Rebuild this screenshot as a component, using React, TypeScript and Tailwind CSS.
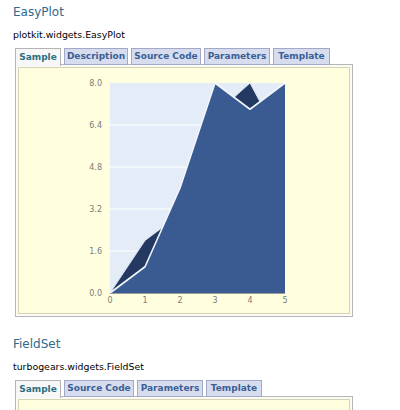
const font = { fontFamily: '"DejaVu Sans", Verdana, sans-serif' }

type TabDef = { label: string; w: string }

function Tabs({ tabs }: { tabs: TabDef[] }) {
  return (
    <div className="flex gap-[3px] ml-[2px] h-[17px] relative z-10">
      {tabs.map((t, i) => (
        <div
          key={t.label}
          className={
            i === 0
              ? `${t.w} h-[18px] border border-b-0 border-[#b4b4b4] bg-[#f7f7f7] text-[#2b6f80] flex items-center justify-center text-[9px] font-bold`
              : `${t.w} h-[17px] border border-[#a2a9c6] bg-[#d7dcef] text-[#3a5f95] flex items-center justify-center text-[9px] font-bold`
          }
        >
          {t.label}
        </div>
      ))}
    </div>
  )
}

function Chart() {
  const x = (i: number) => 110 + i * 35
  const y = (v: number) => 293 - v * 26.25
  const a = [0, 2, 3, 6.8, 8, 5.5]
  const b = [0, 1, 4, 8, 7, 8]
  const area = (vals: number[]) =>
    `M${x(0)},${y(0)} ` + vals.map((v, i) => `L${x(i)},${y(v)}`).join(' ') + ` L${x(5)},${y(0)} Z`
  const line = (vals: number[]) => vals.map((v, i) => `${i ? 'L' : 'M'}${x(i)},${y(v)}`).join(' ')
  const yTicks = [0, 1.6, 3.2, 4.8, 6.4, 8.0]

  return (
    <svg width={329} height={245} viewBox="19 68 329 245" className="block">
      <rect x={110} y={83} width={175} height={210} fill="#e3ecf7" />
      {yTicks.slice(1, 5).map((v) => (
        <line key={v} x1={110} x2={285} y1={y(v)} y2={y(v)} stroke="#ffffff" strokeWidth={1.2} />
      ))}
      <path d={area(a)} fill="#233961" />
      <path d={line(a)} fill="none" stroke="#d8e4f2" strokeWidth={1} />
      <path d={area(b)} fill="#3a5a92" />
      <path d={line(b)} fill="none" stroke="#f2f6fb" strokeWidth={1.6} strokeLinejoin="round" />
      <line x1={110} x2={285} y1={293.5} y2={293.5} stroke="#9a9a9a" strokeWidth={1} />
      {yTicks.map((v) => (
        <text
          key={v}
          x={102}
          y={y(v) + 3}
          textAnchor="end"
          fontSize={8}
          fill="#7a7a7a"
          fontFamily='"DejaVu Sans", Verdana, sans-serif'
        >
          {v.toFixed(1)}
        </text>
      ))}
      {[0, 1, 2, 3, 4, 5].map((i) => (
        <text
          key={i}
          x={x(i)}
          y={303}
          textAnchor="middle"
          fontSize={8}
          fill="#7a7a7a"
          fontFamily='"DejaVu Sans", Verdana, sans-serif'
        >
          {i}
        </text>
      ))}
    </svg>
  )
}

function Section({
  title,
  module,
  tabs,
  children,
}: {
  title: string
  module: string
  tabs: TabDef[]
  children?: React.ReactNode
}) {
  return (
    <div>
      <h2 className="text-[12px] leading-[15px] text-[#2f6a8c] pl-[13px]">{title}</h2>
      <p className="text-[9.4px] leading-[12px] text-black pl-[13px] mt-[9px]">{module}</p>
      <div className="pl-[13px] mt-[7px]">
        <Tabs tabs={tabs} />
        <div className="w-[338px] ml-[2px] -mt-px border border-[#b6b6b6] bg-[#fbfbf6] p-[2px]">
          <div className="border border-[#d4d4b4] bg-[#ffffdf]">{children}</div>
        </div>
      </div>
    </div>
  )
}

export default function App() {
  return (
    <div className="w-[400px] h-[410px] bg-white overflow-hidden pt-[5px]" style={font}>
      <Section
        title="EasyPlot"
        module="plotkit.widgets.EasyPlot"
        tabs={[
          { label: 'Sample', w: 'w-[46px]' },
          { label: 'Description', w: 'w-[64px]' },
          { label: 'Source Code', w: 'w-[70px]' },
          { label: 'Parameters', w: 'w-[66px]' },
          { label: 'Template', w: 'w-[57px]' },
        ]}
      >
        <Chart />
      </Section>
      <div className="h-[20px]" />
      <Section
        title="FieldSet"
        module="turbogears.widgets.FieldSet"
        tabs={[
          { label: 'Sample', w: 'w-[46px]' },
          { label: 'Source Code', w: 'w-[70px]' },
          { label: 'Parameters', w: 'w-[66px]' },
          { label: 'Template', w: 'w-[56px]' },
        ]}
      >
        <div className="h-[60px]" />
      </Section>
    </div>
  )
}
